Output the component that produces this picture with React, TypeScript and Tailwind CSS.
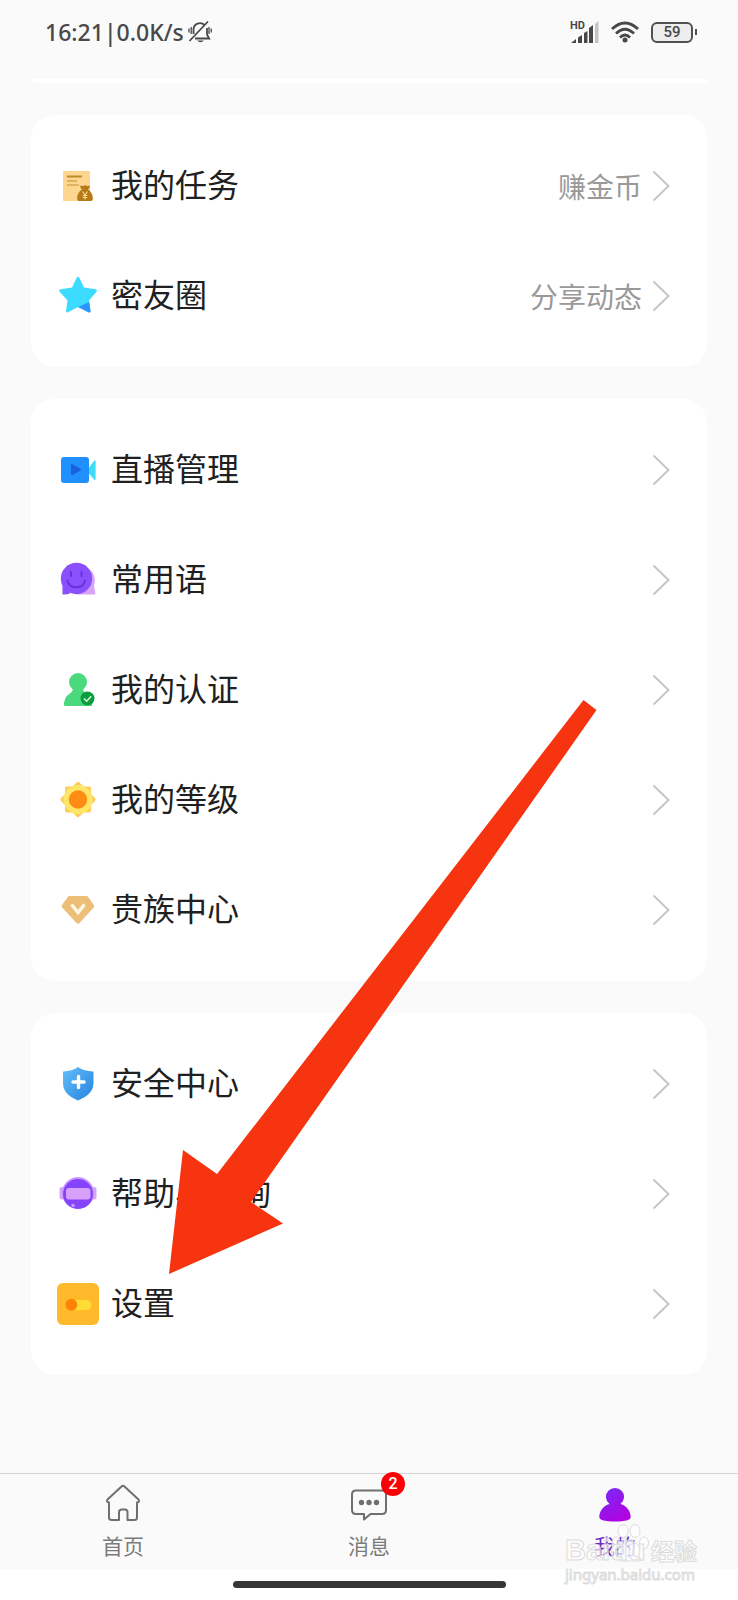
import type { ReactNode } from "react";

type Row = { label: string; icon: ReactNode; value?: string };

const TaskIcon = (
  <>
    <rect x="6" y="6" width="27" height="30" rx="1" fill="#fdd68f" />
    <path d="M10 11.5h15" stroke="#c08a2c" strokeWidth="2" />
    <path d="M10 16h10M10 20h12" stroke="#d9a755" strokeWidth="1.6" />
    <path
      d="M24 20.5c1.3.8 2.3.5 4-.3 1.700.8 2.700 1.100 4 .3l1 1.500-2 2.500c3.200 2 5.200 6 4.800 9.500-.2 1.500-1 2-2.300 2H22.500c-1.300 0-2.100-.5-2.300-2-.4-3.500 1.600-7.500 4.800-9.500l-2-2.500z"
      fill="#b67b18"
    />
    <path
      d="M25.5 26.5l2.500 3.500 2.500-3.500M28 30v4.500M25.7 30.500h4.600M25.7 32.500h4.600"
      stroke="#fdd68f"
      strokeWidth="1.1"
      fill="none"
    />
  </>
);

const StarIcon = (
  <>
    <path
      d="M19.500 3Q21 .5 22.500 3l4.500 9.500 11.500 1.800q2.500.7.8 2.700L32 25.500 33.500 36q0 2-2 1.300L21 32l-10 5.300q-2.200.7-2-1.500L10.500 25.500 2.800 17q-1.600-2 .8-2.700L15 12.500z"
      fill="#3bdcff"
    />
    <path d="M21 32L32.200 27 33.500 36q0 2-2 1.300z" fill="#2a94ff" />
  </>
);

const LiveIcon = (
  <>
    <rect x="4" y="8" width="28" height="26" rx="3" fill="#2090ff" />
    <path d="M14 16.200q0-1.700 1.500-.9l8 4.400q1.500.8 0 1.700l-8 4.500q-1.500.8-1.500-.9z" fill="#1a62dc" />
    <path d="M32 18.500l5-6.500q1.600-1.500 1.600.5v17.500q0 2-1.600.5L32 24.500z" fill="#3fdcfa" />
  </>
);

const PhraseIcon = (
  <>
    <path d="M28 8c9 3 11.500 12 9 19l1.500 8.500H20z" fill="#d7a3fb" />
    <circle cx="19.500" cy="19.500" r="15.700" fill="#8a50fc" />
    <path d="M5.500 26.500v9q5 .5 8-1.500z" fill="#8a50fc" />
    <path
      d="M14 13v4M24.500 13v4M10.500 21.500c1.500 9 16 9 17.500 0"
      stroke="#6b2fe0"
      strokeWidth="2"
      strokeLinecap="round"
      fill="none"
    />
  </>
);

const VerifyIcon = (
  <>
    <circle cx="21" cy="13" r="9" fill="#4ad97c" />
    <path d="M16 18h10c0 4 1 5 4 7 4 2.500 5 6 5 12H8.500q-2 0-1.500-2.500C8 28 10 26.500 13 24.500c2.500-2 3-3.500 3-6.500z" fill="#4ad97c" />
    <circle cx="30.500" cy="29.500" r="7" fill="#0b9e3e" />
    <path d="M27 29.500l2.700 2.700 4.500-5" stroke="#d9f7e3" strokeWidth="1.500" fill="none" />
  </>
);

const LevelIcon = (
  <>
    <rect x="8" y="7.500" width="26" height="26" rx="2" fill="#ffcb57" />
    <rect x="8" y="7.500" width="26" height="26" rx="2" fill="#ffcb57" transform="rotate(45 21 20.500)" />
    <circle cx="21" cy="20.500" r="14.500" fill="#ffe566" />
    <circle cx="21" cy="20.500" r="9.200" fill="#ff8a14" />
  </>
);

const NobleIcon = (
  <>
    <path d="M12.500 7h17q1 0 1.700.9l5.600 8.200q.8 1.300-.2 2.400L22.500 34q-1.500 1.500-3 0L5.200 18.500q-1-1.100-.2-2.400l5.800-8.200Q11.500 7 12.500 7z" fill="#ecbe78" />
    <path d="M14.500 15.500L21 23.500l6.500-8" stroke="#fff8e6" strokeWidth="3.400" fill="none" />
  </>
);

const SafetyIcon = (
  <>
    <defs>
      <linearGradient id="shield" x1="0" y1="0" x2="1" y2="1">
        <stop offset="0" stopColor="#63bff9" />
        <stop offset="1" stopColor="#2583e0" />
      </linearGradient>
    </defs>
    <path d="M21 4c4.500 3 9 4.200 15 4.500q.5 0 .5.700V20c0 9-7 14-15.500 17.500C12.500 34 6 29 6 20V9.200q0-.7.5-.7C12 8.200 17 7 21 4z" fill="url(#shield)" />
    <path d="M21.500 13.500v11M16 19h11" stroke="#fff" strokeWidth="3.400" strokeLinecap="round" />
  </>
);

const HelpIcon = (
  <>
    <rect x="2.500" y="14" width="37" height="12.500" rx="2.500" fill="#d7a3fb" />
    <circle cx="21" cy="20" r="16" fill="#c89afc" />
    <circle cx="21" cy="21" r="15" fill="#8544fb" />
    <rect x="9" y="15" width="24.500" height="11.500" rx="3" fill="#d7a0fa" />
    <circle cx="16" cy="32.500" r="1.800" fill="#c89afc" />
  </>
);

const SettingsIcon = (
  <>
    <rect width="42" height="42" rx="6" fill="#ffb92a" />
    <rect x="10" y="17" width="24.500" height="10" rx="5" fill="#ffdd35" />
    <circle cx="14.300" cy="21.800" r="6" fill="#ff8308" />
  </>
);

const groups: Row[][] = [
  [
    { label: "我的任务", icon: TaskIcon, value: "赚金币" },
    { label: "密友圈", icon: StarIcon, value: "分享动态" },
  ],
  [
    { label: "直播管理", icon: LiveIcon },
    { label: "常用语", icon: PhraseIcon },
    { label: "我的认证", icon: VerifyIcon },
    { label: "我的等级", icon: LevelIcon },
    { label: "贵族中心", icon: NobleIcon },
  ],
  [
    { label: "安全中心", icon: SafetyIcon },
    { label: "帮助与咨询", icon: HelpIcon },
    { label: "设置", icon: SettingsIcon },
  ],
];

function StatusBar() {
  return (
    <header className="flex h-16 items-center justify-between pl-[45px] pr-[41px] text-[#484848]">
      <div className="flex items-center font-['Noto_Sans'] text-[23px] font-medium">
        <span>16:21</span>
        <span>|</span>
        <span>0.0K/s</span>
        {/* muted bell */}
        <svg width="24" height="24" viewBox="0 0 24 24" className="ml-1" fill="none" stroke="currentColor" strokeWidth="1.8">
          <path d="M5.500 14V9.500a6.500 6.500 0 0 1 11-4.500M19 8v6.500l2.200 4H7" />
          <path d="M1.500 21L20 1.500" />
          <path d="M1 8.500v4M3.200 7v7M21 7v7M23.200 8.500v4" strokeWidth="1.3" />
          <path d="M9 20.500h7q-3.500 3.500-7 0z" fill="currentColor" stroke="none" />
        </svg>
      </div>
      <div className="flex items-center">
        <svg width="29" height="24" viewBox="0 0 29 24" className="mr-3" fill="currentColor">
          <text x="0" y="9" fontSize="11" fontWeight="700" fontFamily="Roboto, sans-serif">HD</text>
          <path d="M1 23l5-4v4zM8 17.500l4-2.500v8H8zM14 13l3.500-2v12H14zM19 8l4-3v18h-4z" />
          <path d="M25 4l3.500-3v22H25z" fill="#c4c4c4" />
        </svg>
        <svg width="28" height="22" viewBox="0 0 28 22" className="mr-3" fill="none" stroke="currentColor" strokeWidth="2.8">
          <path d="M1 8q13-12 26 0M5 12.500q9-8.500 18 0M9 16.500q5-5 10 0" />
          <circle cx="14" cy="19" r="2.500" fill="currentColor" stroke="none" />
        </svg>
        <div className="flex h-[21px] w-[42px] items-center justify-center rounded-md border-2 border-[#505050] bg-[#ededed] font-['Roboto'] text-[15px] font-medium">
          59
        </div>
        <div className="ml-0.5 h-1.5 w-0.5 bg-[#505050]" />
      </div>
    </header>
  );
}

function MenuRow({ label, icon, value }: Row) {
  return (
    <a href="#" className="flex h-[110px] items-center pl-[26px] pr-[37px]">
      <svg width="42" height="42" viewBox="0 0 42 42" className="mr-3 shrink-0">
        {icon}
      </svg>
      <span className="flex-1 pb-1.5 text-[32px] leading-10 text-[#202020]">{label}</span>
      {value && <span className="mr-2.5 text-[28px] leading-10 text-[#999]">{value}</span>}
      <svg width="18" height="32" viewBox="0 0 18 32" fill="none" stroke="#c6c6c6" strokeWidth="2">
        <path d="M1.500 1.500L16.500 16l-15 14.500" />
      </svg>
    </a>
  );
}

function TabBar() {
  return (
    <nav className="grid h-24 grid-cols-3 border-t border-[#d6d6d6] bg-[#fafafa] text-[21px] leading-7 text-[#7a7a7a]">
      <a href="#" className="flex flex-col items-center gap-[9px] pt-2.5">
        <svg width="36" height="38" viewBox="0 0 36 38" fill="none" stroke="#6f6f6f" strokeWidth="2" strokeLinejoin="round">
          <path d="M4 18.500q-3-.5-1.500-3L16.500 2.500q1.500-1.500 3 0l14 13q1.500 2.500-1.500 3V33.500q0 2.500-2.500 2.500H22.500V28q0-2.500-2.500-2.500h-3Q14 25.500 14 28v8H7q-3 0-3-2.500z" />
        </svg>
        首页
      </a>
      <a href="#" className="flex flex-col items-center gap-[9px] pt-2.5">
        <span className="relative">
          <svg width="38" height="38" viewBox="0 0 38 38" fill="none" stroke="#6f6f6f" strokeWidth="2" strokeLinejoin="round">
            <path d="M6 6.500h26q4 0 4 4V26q0 4-4 4H20.500L14 35.500V30H6q-4 0-4-4V10.500q0-4 4-4z" />
            <g fill="#6f6f6f" stroke="none">
              <circle cx="11.500" cy="18.500" r="2.700" />
              <circle cx="19" cy="18.500" r="2.700" />
              <circle cx="26.500" cy="18.500" r="2.700" />
            </g>
          </svg>
          <span className="absolute -top-3 left-[31px] flex size-6 items-center justify-center rounded-full bg-[#fb0006] font-['Roboto'] text-[16px] font-medium text-white">
            2
          </span>
        </span>
        消息
      </a>
      <a href="#" className="flex flex-col items-center gap-[9px] pt-2.5 text-[#6a28c4]">
        <svg width="38" height="38" viewBox="0 0 38 38">
          <defs>
            <linearGradient id="me" gradientUnits="userSpaceOnUse" x1="8" y1="6" x2="28" y2="38">
              <stop offset="0" stopColor="#7a28f5" />
              <stop offset="1" stopColor="#b500de" />
            </linearGradient>
          </defs>
          <path
            d="M13.500 20a9 9 0 1 1 11 0C31 21.500 34.700 28 34.700 33q0 4.500-15.700 4.500T3.300 33C3.300 28 7 21.500 13.500 20z"
            fill="url(#me)"
          />
        </svg>
        我的
      </a>
    </nav>
  );
}

function Watermark() {
  return (
    <div className="pointer-events-none absolute right-[41px] bottom-4 w-[132px] text-white/60 [-webkit-text-stroke:1px_#dcdcdc]">
      <svg width="40" height="40" viewBox="0 0 40 40" className="absolute -top-3 left-[46px]" fill="#ffffff99" stroke="#dcdcdc">
        <ellipse cx="12" cy="7" rx="5" ry="6.500" />
        <ellipse cx="24" cy="7" rx="5" ry="6.500" />
        <ellipse cx="5" cy="19" rx="4" ry="6" />
        <ellipse cx="33" cy="19" rx="4.500" ry="6" />
        <path d="M19 16c6 0 7 6 11 9s4 12-3 12H11c-7 0-7-9-3-12s5-9 11-9z" />
      </svg>
      <div className="relative flex items-center justify-between leading-7">
        <span className="font-['Liberation_Sans'] text-[29px] font-bold">Baidu</span>
        <span className="text-[23px] font-bold">经验</span>
      </div>
      <div className="font-['Noto_Sans'] text-[15px] leading-5">jingyan.baidu.com</div>
    </div>
  );
}

export default function App() {
  return (
    <div className="relative flex min-h-screen flex-col overflow-hidden bg-[#fafafa] font-['Noto_Sans_CJK_SC',sans-serif]">
      <StatusBar />
      <main className="flex flex-1 flex-col gap-8 px-[31px] pt-[15px]">
        {/* tail of the card scrolled under the status bar */}
        <div className="h-1 rounded-b-2xl bg-white" />
        {groups.map((rows) => (
          <section key={rows[0].label} className="rounded-3xl bg-white py-4">
            {rows.map((row) => (
              <MenuRow key={row.label} {...row} />
            ))}
          </section>
        ))}
      </main>
      <TabBar />
      <div className="flex h-[31px] items-center justify-center bg-white">
        <div className="h-[7px] w-[273px] rounded-full bg-[#363636]" />
      </div>

      {/* pointer to the settings row */}
      <svg width="430" height="576" viewBox="0 0 430 576" className="pointer-events-none absolute top-[699px] left-[168px]">
        <path d="M415.500 1L428.500 11 83 503l32 21.500L1 575 15 451l34 24z" fill="#f63410" />
      </svg>
      <Watermark />
    </div>
  );
}
